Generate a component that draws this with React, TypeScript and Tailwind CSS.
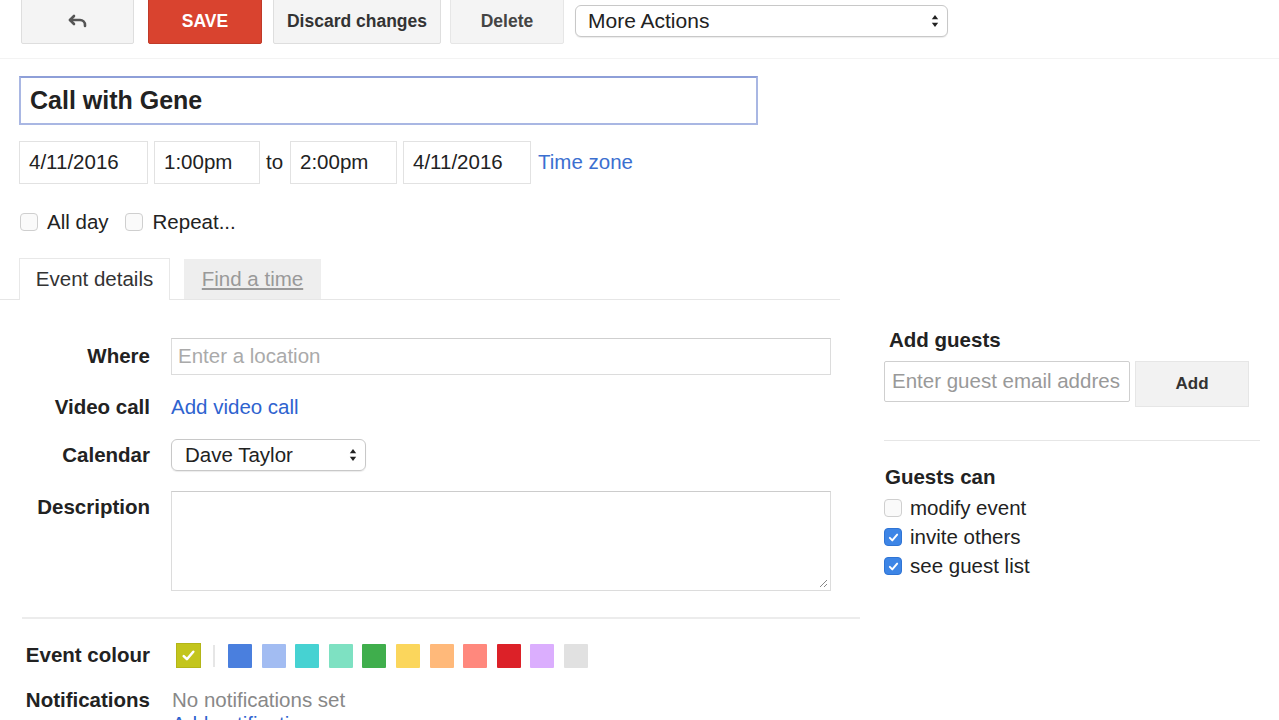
import React from "react";

function Check({ className = "" }: { className?: string }) {
  return (
    <svg viewBox="0 0 16 16" className={className} fill="none" stroke="white" strokeWidth="2.4" strokeLinecap="round" strokeLinejoin="round">
      <path d="M3.5 8.5l3 3 6-7" />
    </svg>
  );
}

function Box({ checked = false }: { checked?: boolean }) {
  return checked ? (
    <span className="w-[18px] h-[18px] rounded-[4px] bg-[#3d85e6] border border-[#2f74d4] flex items-center justify-center shrink-0">
      <Check className="w-[13px] h-[13px]" />
    </span>
  ) : (
    <span className="block w-[18px] h-[18px] rounded-[4px] bg-[#fafafa] border border-[#cfcfcf] shrink-0" />
  );
}

function SelectArrows() {
  return (
    <svg viewBox="0 0 8 14" className="w-[8px] h-[14px]" fill="#222">
      <path d="M4 1l3.2 4.2H0.8z" />
      <path d="M4 13l3.2-4.2H0.8z" />
    </svg>
  );
}

const swatches = ["#4a7fde", "#a2bcf2", "#46d2d2", "#7ee1c2", "#3fae4c", "#fbd65c", "#ffb97a", "#ff887d", "#dc2128", "#dbaefe", "#e1e1e1"];

export default function App() {
  return (
    <div className="w-[1279px] h-[720px] overflow-hidden bg-white font-['Liberation_Sans',Arial,sans-serif] text-[#222] text-[20.5px]">
      {/* toolbar */}
      <div className="flex items-start pl-[21px] pb-[14px] border-b border-[#f3f3f3]">
        <button className="w-[113px] h-[46px] -mt-[2px] bg-[#f4f4f4] border border-[#dedede] rounded-[2px] flex items-center justify-center">
          <svg viewBox="0 0 24 24" className="w-[24px] h-[24px]" fill="none" stroke="#555" strokeWidth="2.6" strokeLinecap="round" strokeLinejoin="round">
            <path d="M8 7l-4 4 4 4" />
            <path d="M4 11h10a5 5 0 0 1 5 5v1" />
          </svg>
        </button>
        <button className="ml-[14px] w-[114px] h-[46px] -mt-[2px] bg-[#d9432f] border border-[#c03a28] rounded-[2px] text-white font-bold text-[17.5px]">SAVE</button>
        <button className="ml-[11px] w-[168px] h-[46px] -mt-[2px] bg-[#f4f4f4] border border-[#dedede] rounded-[2px] font-bold text-[17.5px] text-[#333]">Discard changes</button>
        <button className="ml-[9px] w-[114px] h-[46px] -mt-[2px] bg-[#f4f4f4] border border-[#e6e6e6] rounded-[2px] font-bold text-[17.5px] text-[#444]">Delete</button>
        <div className="ml-[11px] mt-[5px] w-[373px] h-[32px] border border-[#c8c8c8] rounded-[6px] bg-white flex items-center justify-between pl-[12px] pr-[8px] text-[21px] shadow-[0_1px_1px_rgba(0,0,0,0.08)]">
          <span>More Actions</span>
          <SelectArrows />
        </div>
      </div>

      {/* title */}
      <div className="pl-[19px] pt-[17px]">
        <div className="w-[739px] h-[49px] border-2 border-[#a9b7e3] border-t-[#8e9fd8] flex items-center pl-[9px] text-[25px] font-bold">Call with Gene</div>
      </div>

      {/* date row */}
      <div className="flex items-center pl-[19px] mt-[16px]">
        <div className="w-[129px] h-[43px] border border-[#e2e2e2] flex items-center pl-[9px]">4/11/2016</div>
        <div className="ml-[6px] w-[106px] h-[43px] border border-[#e2e2e2] flex items-center pl-[9px]">1:00pm</div>
        <span className="ml-[6px] w-[24px]">to</span>
        <div className="w-[107px] h-[43px] border border-[#e2e2e2] flex items-center pl-[9px]">2:00pm</div>
        <div className="ml-[6px] w-[128px] h-[43px] border border-[#e2e2e2] flex items-center pl-[9px]">4/11/2016</div>
        <span className="ml-[7px] text-[#3b6fd0]">Time zone</span>
      </div>

      {/* checkboxes */}
      <div className="flex items-center pl-[20px] mt-[27px] h-[22px]">
        <Box />
        <span className="ml-[9px]">All day</span>
        <span className="ml-[16px] flex"><Box /></span>
        <span className="ml-[10px]">Repeat...</span>
      </div>

      {/* tabs */}
      <div className="mt-[25px] w-[840px] flex items-end pl-[19px] border-b border-[#e6e6e6] h-[42px]">
        <div className="w-[151px] h-[42px] bg-white border border-b-0 border-[#e8e8e8] flex items-center justify-center text-[#333] -mb-px">Event details</div>
        <div className="ml-[14px] w-[137px] h-[40px] bg-[#eeeeee] flex items-center justify-center text-[#999] underline">Find a time</div>
      </div>

      {/* body */}
      <div className="flex">
        <div className="w-[860px] shrink-0">
          <div className="flex items-center mt-[38px] h-[37px]">
            <div className="w-[150px] text-right font-bold">Where</div>
            <div className="ml-[21px] w-[660px] h-[37px] border border-[#dcdcdc] border-t-[#cfcfcf] flex items-center pl-[6px] text-[#aaa]">Enter a location</div>
          </div>
          <div className="flex items-center mt-[19px] h-[26px]">
            <div className="w-[150px] text-right font-bold">Video call</div>
            <div className="ml-[21px] text-[#2e63cf]">Add video call</div>
          </div>
          <div className="flex items-center mt-[19px] h-[32px]">
            <div className="w-[150px] text-right font-bold">Calendar</div>
            <div className="ml-[21px] w-[195px] h-[32px] border border-[#c8c8c8] rounded-[6px] flex items-center justify-between pl-[13px] pr-[8px] shadow-[0_1px_1px_rgba(0,0,0,0.08)]">
              <span>Dave Taylor</span>
              <SelectArrows />
            </div>
          </div>
          <div className="flex items-start mt-[20px]">
            <div className="w-[150px] text-right font-bold pt-[1px]">Description</div>
            <div className="ml-[21px] w-[660px] h-[100px] border border-[#dcdcdc] border-t-[#cccccc] relative">
              <svg viewBox="0 0 10 10" className="absolute right-[2px] bottom-[2px] w-[10px] h-[10px]" stroke="#888" strokeWidth="1">
                <path d="M9 2L2 9M9 6L6 9" />
              </svg>
            </div>
          </div>
          <div className="ml-[22px] mt-[26px] w-[838px] border-t-2 border-[#ececec]" />
          <div className="flex items-center mt-[24px] h-[25px]">
            <div className="w-[150px] text-right font-bold">Event colour</div>
            <div className="ml-[26px] flex items-center">
              <span className="w-[25px] h-[25px] bg-[#c3c51c] border border-[#b3b518] flex items-center justify-center">
                <Check className="w-[17px] h-[17px]" />
              </span>
              <span className="ml-[12px] w-[2px] h-[22px] bg-[#e6e6e6]" />
              <div className="ml-[13px] flex items-center gap-[9.6px]">
                {swatches.map((c) => (
                  <span key={c} className="w-[24px] h-[24px] rounded-[1px]" style={{ backgroundColor: c }} />
                ))}
              </div>
            </div>
          </div>
          <div className="flex items-center mt-[20px] h-[24px]">
            <div className="w-[150px] text-right font-bold">Notifications</div>
            <div className="ml-[22px] text-[#888]">No notifications set</div>
          </div>
          <div className="ml-[172px] text-[#2e63cf] leading-[24px]">Add notification</div>
        </div>

        {/* right column */}
        <div className="ml-[24px] w-[376px]">
          <div className="mt-[28px] ml-[5px] font-bold leading-[24px]">Add guests</div>
          <div className="flex items-start mt-[9px]">
            <div className="w-[246px] h-[41px] border border-[#cfcfcf] rounded-[2px] flex items-center pl-[7px] text-[#999] overflow-hidden whitespace-nowrap">Enter guest email addres</div>
            <div className="ml-[5px] w-[114px] h-[46px] bg-[#f2f2f2] border border-[#e6e6e6] flex items-center justify-center font-bold text-[17px] text-[#333]">Add</div>
          </div>
          <div className="mt-[33px] w-[376px] border-t border-[#e6e6e6]" />
          <div className="mt-[24px] ml-[1px] font-bold leading-[24px]">Guests can</div>
          <div className="mt-[8px] flex flex-col gap-[7px]">
            <div className="flex items-center h-[22px]"><Box /><span className="ml-[8px]">modify event</span></div>
            <div className="flex items-center h-[22px]"><Box checked /><span className="ml-[8px]">invite others</span></div>
            <div className="flex items-center h-[22px]"><Box checked /><span className="ml-[8px]">see guest list</span></div>
          </div>
        </div>
      </div>
    </div>
  );
}
